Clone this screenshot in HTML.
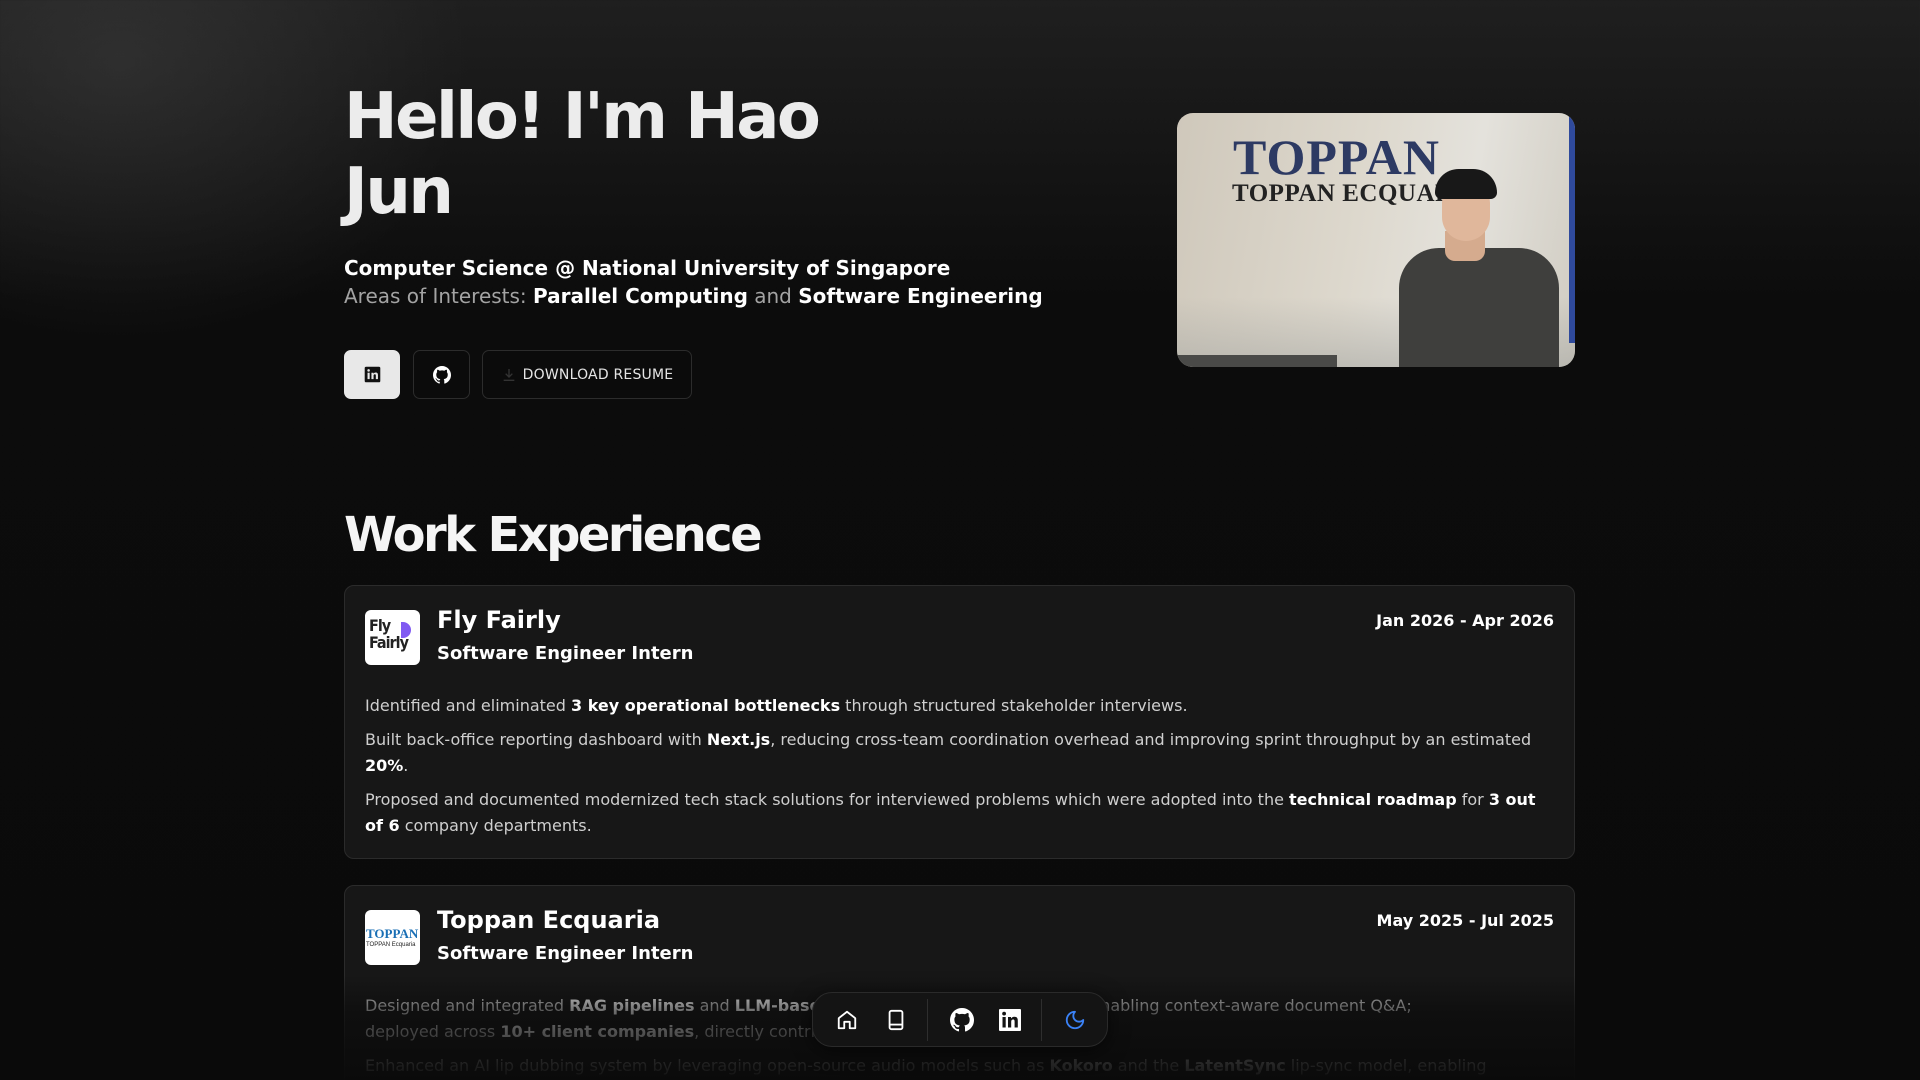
<!DOCTYPE html>
<html><head><meta charset="utf-8"><style>
*{box-sizing:border-box;margin:0;padding:0}
html,body{width:1920px;height:1080px;overflow:hidden}
body{font-family:"DejaVu Sans","Liberation Sans",sans-serif;color:#fff;
background:radial-gradient(ellipse 500px 400px at 120px 60px,rgba(70,70,70,.45),transparent 70%),linear-gradient(#1f1f1f 0px,#0c0c0c 300px,#0a0a0a 1080px);position:relative}
.wrap{position:absolute;left:344px;width:1231px;top:0}
h1{position:absolute;top:80px;left:0;font-size:64px;line-height:75px;font-weight:bold;color:#ececec;letter-spacing:-2.5px}
.sub{position:absolute;top:254px;left:0;font-size:20px;line-height:28px}
.sub b{color:#fff}.sub .g{color:#a3a3a3}
.btn{position:absolute;top:350px;height:49px;border:1px solid #2c2c2c;border-radius:7px;background:#0b0b0b;display:flex;align-items:center;justify-content:center}
.photo{position:absolute;left:1177px;top:113px;width:398px;height:254px;border-radius:16px;overflow:hidden;background:linear-gradient(100deg,#cfc8bb 0%,#ddd8cd 45%,#e4e2dc 70%,#d0ccc2 100%)}
h2{position:absolute;top:507px;left:0;font-size:48px;font-weight:bold;color:#f5f5f5;letter-spacing:-2.6px}
.card{position:absolute;left:0;width:1231px;border:1px solid #2b2b2b;border-radius:10px;background:#171717;padding:20px 20px}
.logo{position:absolute;left:20px;top:24px;width:55px;height:55px;border-radius:6px;background:#fff;overflow:hidden}
.co{position:absolute;left:92px;top:20px;font-size:24px;font-weight:bold}
.role{position:absolute;left:92px;top:57px;font-size:18px;font-weight:bold}
.date{position:absolute;right:20px;top:25px;font-size:16px;font-weight:bold}
.body{position:absolute;left:20px;right:30px;top:107px;font-size:16px;line-height:26px;color:#cfcfcf}
.body p{margin-bottom:8px}.body b{color:#fff}
.dock{position:absolute;left:812px;top:992px;width:296px;height:55px;border-radius:20px;background:#141414;border:1px solid #2a2a2a;box-shadow:0 4px 20px rgba(0,0,0,.6)}
.fade{position:absolute;left:0;right:0;top:975px;height:105px;background:linear-gradient(rgba(10,10,10,0),rgba(10,10,10,.6) 35%,rgba(10,10,10,.97))}
</style></head><body>
<div class="wrap">
<h1>Hello! I'm Hao<br>Jun</h1>
<div class="sub"><b>Computer Science @ National University of Singapore</b><br><span class="g">Areas of Interests: </span><b>Parallel Computing</b><span class="g"> and </span><b>Software Engineering</b></div>
<div class="btn" style="left:0;width:56px;background:#e8e8e8;border-color:#e8e8e8"><svg width="17" height="17" viewBox="0 0 24 24"><rect x="1" y="1" width="22" height="22" rx="2" fill="#111"/><rect x="5" y="9.5" width="3" height="9" fill="#e8e8e8"/><circle cx="6.5" cy="6.2" r="1.8" fill="#e8e8e8"/><path d="M10.5 9.5h2.8v1.4c.6-1 1.7-1.7 3.2-1.7 2.6 0 3.2 1.6 3.2 3.9v5.4h-3v-4.8c0-1.1-.2-2-1.4-2s-1.8.9-1.8 2v4.8h-3z" fill="#e8e8e8"/></svg></div>
<div class="btn" style="left:69px;width:57px"><svg width="18" height="18" viewBox="0 0 16 16" fill="#fff"><path d="M8 0C3.58 0 0 3.58 0 8c0 3.54 2.29 6.53 5.47 7.59.4.07.55-.17.55-.38v-1.33c-2.23.48-2.7-1.07-2.7-1.07-.36-.92-.89-1.17-.89-1.17-.73-.5.05-.49.05-.49.8.06 1.23.83 1.230.83.72 1.23 1.88.87 2.34.67.07-.52.28-.87.51-1.07-1.78-.2-3.64-.89-3.64-3.95 0-.87.31-1.59.82-2.15-.08-.2-.36-1.02.08-2.12 0 0 .67-.21 2.2.82a7.6 7.6 0 0 1 4 0c1.53-1.04 2.2-.82 2.2-.82.44 1.1.16 1.92.08 2.12.51.56.82 1.27.82 2.15 0 3.07-1.87 3.75-3.65 3.95.29.25.54.73.54 1.48v2.2c0 .21.15.46.55.38A8 8 0 0 0 16 8c0-4.42-3.58-8-8-8z"/></svg></div>
<div class="btn" style="left:138px;width:210px;font-size:14px;color:#e5e5e5;letter-spacing:.2px"><svg width="16" height="16" viewBox="0 0 24 24" fill="none" stroke="#333" stroke-width="2" style="margin-right:6px"><path d="M12 3v12M7 10l5 5 5-5M4 20h16"/></svg>DOWNLOAD RESUME</div>
<h2>Work Experience</h2>
<div class="card" style="top:585px;height:274px">
<div class="logo" style="background:#fff"><div style="position:absolute;left:4px;top:7px;font:bold 16px/17px 'DejaVu Sans Condensed','DejaVu Sans',sans-serif;color:#222;letter-spacing:-1px">Fly<br>Fairly</div><div style="position:absolute;left:36px;top:12px;width:10px;height:16px;border-radius:0 10px 10px 0;background:#6a3df0;opacity:.85"></div></div>
<div class="co">Fly Fairly</div><div class="role">Software Engineer Intern</div><div class="date">Jan 2026 - Apr 2026</div>
<div class="body">
<p>Identified and eliminated <b>3 key operational bottlenecks</b> through structured stakeholder interviews.</p>
<p>Built back-office reporting dashboard with <b>Next.js</b>, reducing cross-team coordination overhead and improving sprint throughput by an estimated <b>20%</b>.</p>
<p>Proposed and documented modernized tech stack solutions for interviewed problems which were adopted into the <b>technical roadmap</b> for <b>3 out of 6</b> company departments.</p>
</div></div>
<div class="card" style="top:885px;height:260px">
<div class="logo"><div style="position:absolute;left:1px;top:16px;font:bold 13px 'Liberation Serif',serif;color:#1a6fb5">TOPPAN</div><div style="position:absolute;left:1px;top:32px;font:6px 'Liberation Sans',sans-serif;color:#222;white-space:nowrap">TOPPAN Ecquaria</div></div>
<div class="co">Toppan Ecquaria</div><div class="role">Software Engineer Intern</div><div class="date">May 2025 - Jul 2025</div>
<div class="body">
<p>Designed and integrated <b>RAG pipelines</b> and <b>LLM-based</b> features into internal products, enabling context-aware document Q&amp;A;<br>deployed across <b>10+ client companies</b>, directly contributing to revenue.</p>
<p>Enhanced an AI lip dubbing system by leveraging open-source audio models such as <b>Kokoro</b> and the <b>LatentSync</b> lip-sync model, enabling</p>
</div></div>
</div>
<div class="photo">
<div style="position:absolute;left:0;right:0;bottom:0;height:70px;background:linear-gradient(rgba(190,190,185,0),rgba(170,170,165,.6))"></div>
<div style="position:absolute;left:0;width:160px;bottom:0;height:12px;background:#4a4a48"></div>
<div style="position:absolute;left:56px;top:16px;font:bold 50px/56px 'Liberation Serif',serif;color:#2d3a63;letter-spacing:1px">TOPPAN</div>
<div style="position:absolute;left:55px;top:67px;font:bold 25px/28px 'Liberation Serif',serif;color:#222;letter-spacing:.5px">TOPPAN ECQUARIA</div>
<div style="position:absolute;right:0;top:0;width:6px;height:230px;background:#2f4a9c"></div>
<div style="position:absolute;left:222px;top:135px;width:160px;height:130px;background:#3f3f3d;border-radius:40px 40px 0 0"></div>
<div style="position:absolute;left:268px;top:118px;width:40px;height:30px;background:#d5ab8e;border-radius:0 0 10px 10px"></div>
<div style="position:absolute;left:265px;top:68px;width:48px;height:60px;background:#e0b79b;border-radius:22px 22px 24px 24px"></div>
<div style="position:absolute;left:258px;top:56px;width:62px;height:30px;background:#181818;border-radius:30px 30px 8px 8px"></div>
</div>
<div class="fade"></div>
<div class="dock">
<svg style="position:absolute;left:23px;top:16px" width="22" height="22" viewBox="0 0 24 24" fill="none" stroke="#fff" stroke-width="2" stroke-linejoin="round"><path d="M3 10l9-7 9 7v11h-6v-7H9v7H3z"/></svg>
<svg style="position:absolute;left:72px;top:16px" width="22" height="22" viewBox="0 0 24 24" fill="none" stroke="#fff" stroke-width="2"><rect x="5" y="2" width="14" height="20" rx="2"/><path d="M5 17h14"/></svg>
<div style="position:absolute;left:114px;top:6px;width:1px;height:42px;background:#2e2e2e"></div>
<svg style="position:absolute;left:137px;top:15px" width="24" height="24" viewBox="0 0 16 16" fill="#fff"><path d="M8 0C3.58 0 0 3.58 0 8c0 3.54 2.29 6.53 5.47 7.59.4.07.55-.17.55-.38v-1.33c-2.23.48-2.7-1.07-2.7-1.07-.36-.92-.89-1.17-.89-1.17-.73-.5.05-.49.05-.49.8.06 1.23.83 1.23.83.72 1.23 1.88.87 2.34.67.07-.52.28-.87.51-1.07-1.78-.2-3.64-.89-3.64-3.95 0-.87.31-1.59.82-2.15-.08-.2-.36-1.02.08-2.12 0 0 .67-.21 2.2.82a7.6 7.6 0 0 1 4 0c1.53-1.04 2.2-.82 2.2-.82.44 1.1.16 1.92.08 2.12.51.56.82 1.27.82 2.15 0 3.07-1.87 3.75-3.65 3.95.29.25.54.73.54 1.48v2.2c0 .21.15.46.55.38A8 8 0 0 0 16 8c0-4.42-3.58-8-8-8z"/></svg>
<svg style="position:absolute;left:185px;top:15px" width="24" height="24" viewBox="0 0 24 24"><rect x="1" y="1" width="22" height="22" rx="1" fill="#fff"/><rect x="4.5" y="9" width="3.2" height="10.5" fill="#141414"/><circle cx="6.1" cy="5.6" r="1.9" fill="#141414"/><path d="M10 9h3v1.5c.6-1 1.8-1.8 3.4-1.8 2.8 0 3.4 1.7 3.4 4.1v6.7h-3.2v-5.8c0-1.2-.2-2.2-1.5-2.2s-1.9 1-1.9 2.2v5.8H10z" fill="#141414"/></svg>
<div style="position:absolute;left:228px;top:6px;width:1px;height:42px;background:#2e2e2e"></div>
<svg style="position:absolute;left:251px;top:16px" width="22" height="22" viewBox="0 0 24 24" fill="none" stroke="#3b82f6" stroke-width="2" stroke-linecap="round" stroke-linejoin="round"><path d="M12 3a6 6 0 0 0 9 9 9 9 0 1 1-9-9z"/></svg>
</div>
</body></html>
